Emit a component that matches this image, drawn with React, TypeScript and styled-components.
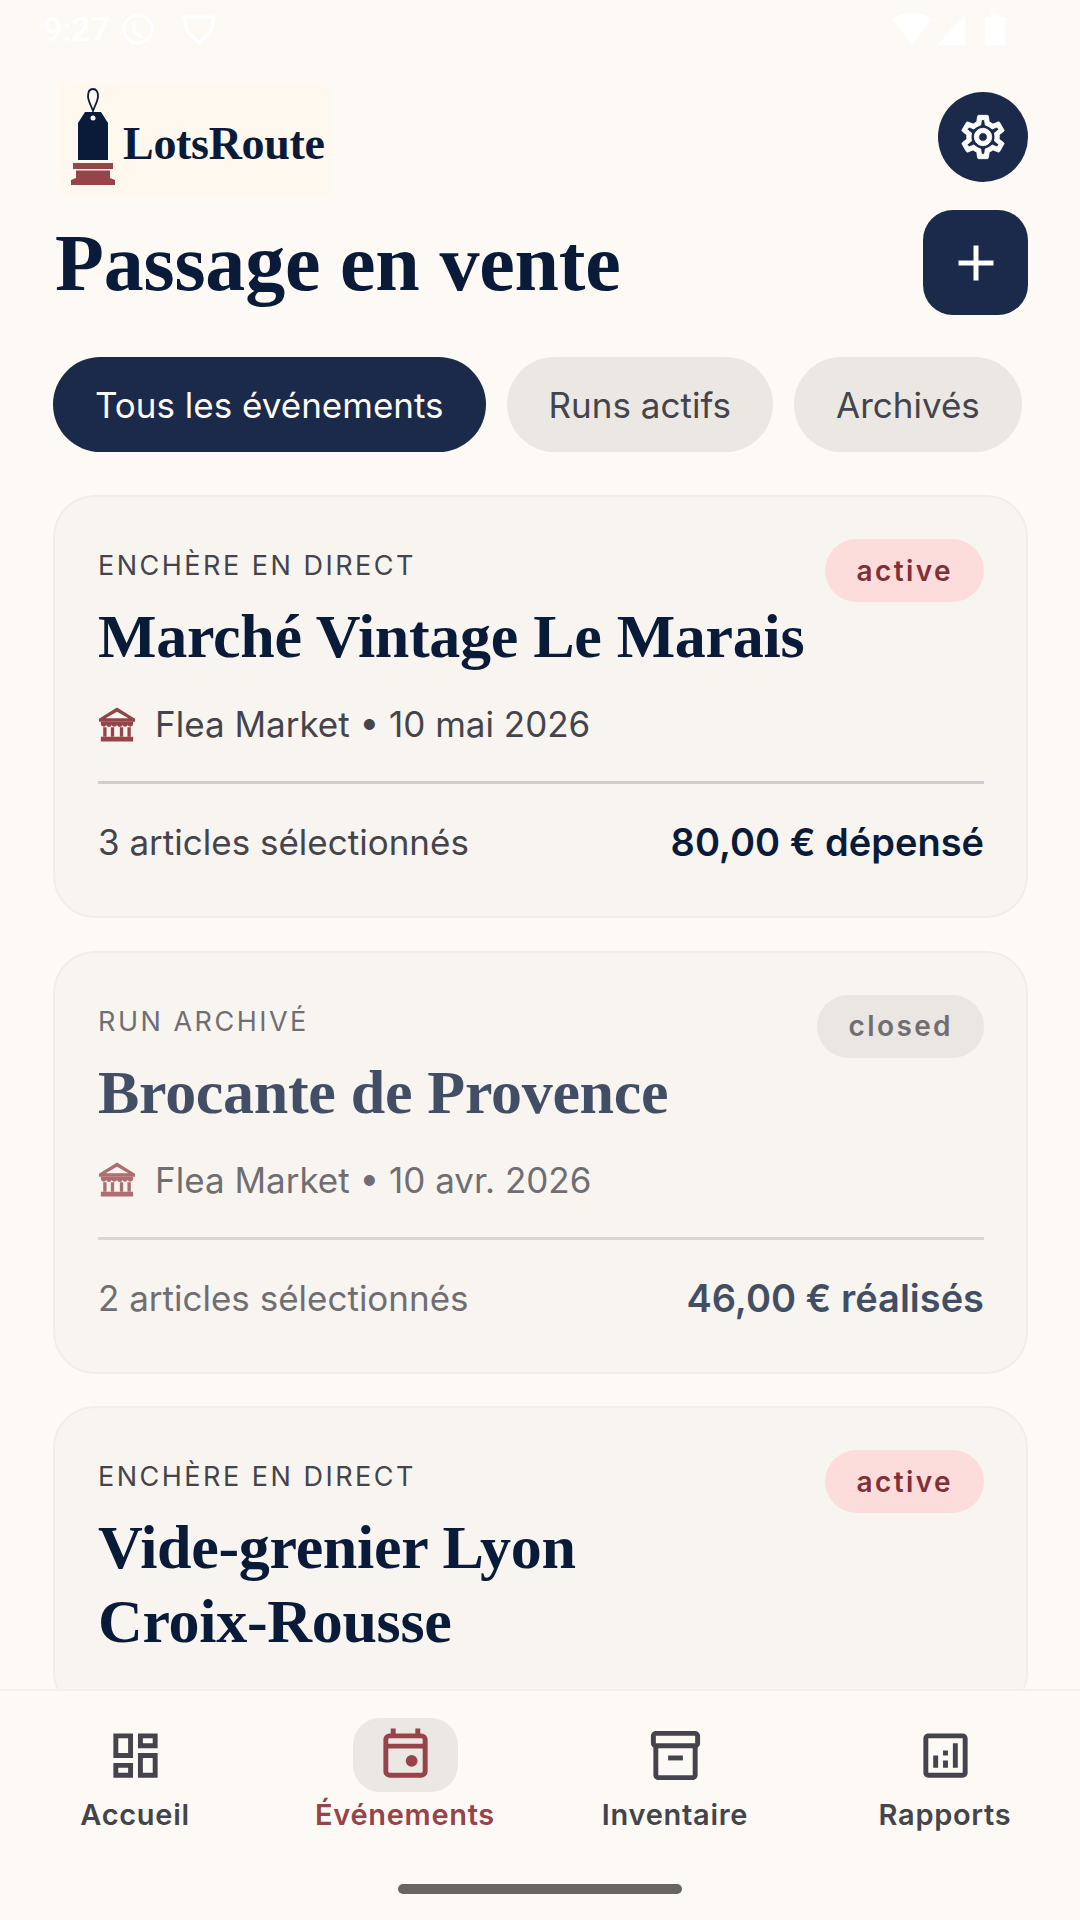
// App.tsx
import styled, { createGlobalStyle } from "styled-components";
import {
  MdAdd,
  MdOutlineAnalytics,
  MdOutlineDashboard,
  MdOutlineInventory2,
  MdOutlineSettings,
} from "react-icons/md";

const GlobalStyle = createGlobalStyle`
  * { box-sizing: border-box; }
  html, body { margin: 0; padding: 0; background: #fdfaf5; }
  body { font-family: "Inter", "Liberation Sans", sans-serif; }
`;

const SERIF = `"Liberation Serif", "Times New Roman", serif`;

interface EventCardData {
  kicker: string;
  title: string;
  status: "active" | "closed";
  meta?: string;
  count?: string;
  amount?: string;
  archived?: boolean;
}

const events: EventCardData[] = [
  {
    kicker: "ENCHÈRE EN DIRECT",
    title: "Marché Vintage Le Marais",
    status: "active",
    meta: "Flea Market • 10 mai 2026",
    count: "3 articles sélectionnés",
    amount: "80,00 € dépensé",
  },
  {
    kicker: "RUN ARCHIVÉ",
    title: "Brocante de Provence",
    status: "closed",
    meta: "Flea Market • 10 avr. 2026",
    count: "2 articles sélectionnés",
    amount: "46,00 € réalisés",
    archived: true,
  },
  {
    kicker: "ENCHÈRE EN DIRECT",
    title: "Vide-grenier Lyon\nCroix-Rousse",
    status: "active",
  },
];

const LogoMark = () => (
  <svg width="48" height="100" viewBox="0 0 48 100" fill="none">
    <path d="M24 2c-3.500 0-5 3-5 7 0 5 3 9 5 15 2-6 5-10 5-15 0-4-1.500-7-5-7z" stroke="#0a1b3a" strokeWidth="1.800" />
    <path d="M16 25h16l7 11v37H9V36z" fill="#0a1b3a" />
    <circle cx="24" cy="31" r="2.500" fill="#fdf6ea" />
    <path d="M4 76h40v6h-3v9l5 2v5H2v-5l5-2v-9H4z" fill="#96434a" />
    <path d="M7 82h34v1.500H7z" fill="#fdf6ea" />
  </svg>
);

const TempleIcon = () => (
  <svg width="38" height="35" viewBox="0 0 40 36" fill="#96434a">
    <path d="M20 0 39 12v3H1v-3zM20 4.500 8 11.500h24z" fillRule="evenodd" />
    <path d="M3 15h34v2.500a3 3 0 0 1-5.700 1 3 3 0 0 1-5.600 0 3 3 0 0 1-5.700 0 3 3 0 0 1-5.600 0 3 3 0 0 1-5.700 0A3 3 0 0 1 3 17.500z" />
    <path d="M5.500 21H9v10H5.500zM13.500 21H17v10h-3.500zM23 21h3.500v10H23zM31 21h3.500v10H31z" />
    <path d="M3 31h34v5H3z" />
  </svg>
);

const CalendarDotIcon = () => (
  <svg width="59" height="59" viewBox="0 0 24 24" fill="none" stroke="#96434a" strokeWidth="2">
    <rect x="4" y="4" width="16" height="16" rx="1.500" />
    <path d="M3.500 8.200h17M7 1v3M17 1v3" />
    <circle cx="14.500" cy="14.200" r="2.400" fill="#96434a" stroke="none" />
  </svg>
);

const StatusIcons = () => (
  <svg width="120" height="40" viewBox="0 0 120 40" fill="#ffffff">
    <path d="M1 10c10-8 30-8 40 0L21 36z" />
    <path d="M74 6v30H46z" />
    <path d="M94 8h6V4h8v4h6v28H94z" />
  </svg>
);

const AppIcons = () => (
  <svg width="120" height="40" viewBox="0 0 120 40" fill="none" stroke="#ffffff" strokeWidth="3">
    <circle cx="18" cy="20" r="14" />
    <path d="M14 12v12l8 4" />
    <path d="M64 8h30l-3 14-12 12-12-12z" />
  </svg>
);

const App = () => {
  return (
    <Screen>
      <GlobalStyle />
      <Scroller>
        <StatusBar>
          <StatusLeft>
            <Clock>9:27</Clock>
            <AppIcons />
          </StatusLeft>
          <StatusIcons />
        </StatusBar>

        <LogoRow>
          <LogoBox>
            <LogoMark />
            <LogoText>LotsRoute</LogoText>
          </LogoBox>
          <SettingsButton>
            <MdOutlineSettings size={52} />
          </SettingsButton>
        </LogoRow>

        <TitleRow>
          <PageTitle>Passage en vente</PageTitle>
          <AddButton>
            <MdAdd size={60} />
          </AddButton>
        </TitleRow>

        <Tabs>
          <Tab $active>Tous les événements</Tab>
          <Tab>Runs actifs</Tab>
          <Tab>Archivés</Tab>
        </Tabs>

        <CardList>
          {events.map((event) => (
            <Card key={event.title}>
              <CardInner $archived={event.archived}>
                <CardTop>
                  <CardHeading>
                    <Kicker>{event.kicker}</Kicker>
                    <CardTitle>{event.title}</CardTitle>
                  </CardHeading>
                  <Badge $status={event.status}>{event.status}</Badge>
                </CardTop>
                {event.meta && (
                  <>
                    <Meta>
                      <TempleIcon />
                      <span>{event.meta}</span>
                    </Meta>
                    <Divider />
                    <CardFooter>
                      <Count>{event.count}</Count>
                      <Amount>{event.amount}</Amount>
                    </CardFooter>
                  </>
                )}
              </CardInner>
            </Card>
          ))}
        </CardList>
      </Scroller>

      <BottomNav>
        <NavItems>
          <NavItem>
            <NavIcon>
              <MdOutlineDashboard size={59} />
            </NavIcon>
            <NavLabel>Accueil</NavLabel>
          </NavItem>
          <NavItem>
            <NavIcon $active>
              <CalendarDotIcon />
            </NavIcon>
            <NavLabel $active>Événements</NavLabel>
          </NavItem>
          <NavItem>
            <NavIcon>
              <MdOutlineInventory2 size={59} />
            </NavIcon>
            <NavLabel>Inventaire</NavLabel>
          </NavItem>
          <NavItem>
            <NavIcon>
              <MdOutlineAnalytics size={59} />
            </NavIcon>
            <NavLabel>Rapports</NavLabel>
          </NavItem>
        </NavItems>
        <HomeBar />
      </BottomNav>
    </Screen>
  );
};

const Screen = styled.div`
  width: 1080px;
  height: 1920px;
  display: flex;
  flex-direction: column;
  overflow: hidden;
  background: #fdfaf5;
`;

const Scroller = styled.main`
  flex: 1;
  min-height: 0;
  overflow: hidden;
  padding: 0 52px 0 53px;
`;

const StatusBar = styled.div`
  height: 82px;
  margin: 0 -8px 0 -10px;
  padding: 0 25px 24px 0;
  display: flex;
  align-items: center;
  justify-content: space-between;
`;

const StatusLeft = styled.div`
  display: flex;
  align-items: center;
  gap: 10px;
`;

const Clock = styled.span`
  font-family: "Roboto", sans-serif;
  font-size: 34px;
  font-weight: 500;
  color: #ffffff;
`;

const LogoRow = styled.div`
  display: flex;
  align-items: flex-start;
  justify-content: space-between;
`;

const LogoBox = styled.div`
  width: 270px;
  height: 113px;
  margin-left: 7px;
  padding: 5px 0 0 9px;
  display: flex;
  align-items: flex-start;
  gap: 6px;
  background: #fff8ee;
`;

const LogoText = styled.span`
  margin-top: 32px;
  font-family: ${SERIF};
  font-size: 46px;
  font-weight: 700;
  line-height: 50px;
  letter-spacing: -0.3px;
  color: #0a1b3a;
`;

const SettingsButton = styled.button`
  width: 90px;
  height: 90px;
  margin-top: 10px;
  padding: 0;
  border: none;
  border-radius: 50%;
  display: flex;
  align-items: center;
  justify-content: center;
  color: #ffffff;
  background: #1b2a4a;

  svg path {
    stroke: currentColor;
    stroke-width: 0.4;
  }

  svg path[fill="none"] {
    stroke: none;
  }
`;

const TitleRow = styled.div`
  margin-top: 15px;
  display: flex;
  align-items: center;
  justify-content: space-between;
`;

const PageTitle = styled.h1`
  margin: 0 0 0 2px;
  font-family: ${SERIF};
  font-size: 80px;
  font-weight: 700;
  line-height: 100px;
  letter-spacing: -0.2px;
  color: #0a1b3a;
`;

const AddButton = styled.button`
  width: 105px;
  height: 105px;
  padding: 0;
  border: none;
  border-radius: 30px;
  display: flex;
  align-items: center;
  justify-content: center;
  color: #ffffff;
  background: #1b2a4a;
`;

const Tabs = styled.div`
  margin-top: 42px;
  display: flex;
  gap: 21px;
`;

const Tab = styled.div<{ $active?: boolean }>`
  height: 95px;
  padding: 0 42px;
  border-radius: 48px;
  display: flex;
  align-items: center;
  font-size: 35px;
  font-weight: 400;
  color: ${(props) => (props.$active ? "#fdfaf5" : "#45444c")};
  background: ${(props) => (props.$active ? "#1b2a4a" : "#ebe8e3")};
`;

const CardList = styled.div`
  margin-top: 43px;
  display: flex;
  flex-direction: column;
  gap: 32.5px;
`;

const Card = styled.article`
  border: 2px solid #f1eee9;
  border-radius: 42px;
  background: #f8f5f0;
`;

const CardInner = styled.div<{ $archived?: boolean }>`
  padding: 42px 42px 54px 43px;
  opacity: ${(props) => (props.$archived ? 0.76 : 1)};
`;

const CardTop = styled.div`
  display: flex;
  align-items: flex-start;
  justify-content: space-between;
  gap: 4px;
`;

const CardHeading = styled.div`
  flex: 1;
  min-width: 0;
`;

const Kicker = styled.div`
  margin-top: 7px;
  font-size: 27px;
  line-height: 40px;
  letter-spacing: 2.5px;
  color: #45444c;
`;

const CardTitle = styled.h2`
  margin: 13px 0 0;
  font-family: ${SERIF};
  font-size: 62px;
  font-weight: 700;
  line-height: 74px;
  letter-spacing: -0.3px;
  white-space: pre-line;
  color: #0a1b3a;
`;

const Badge = styled.span<{ $status: "active" | "closed" }>`
  flex-shrink: 0;
  height: 63px;
  padding: 0 31px 0 32px;
  border-radius: 32px;
  display: flex;
  align-items: center;
  font-size: 28px;
  font-weight: 600;
  letter-spacing: 2.4px;
  color: ${(props) => (props.$status === "active" ? "#7f3038" : "#45444c")};
  background: ${(props) => (props.$status === "active" ? "#fddcdc" : "#e6e3de")};
`;

const Meta = styled.div`
  margin-top: 31px;
  height: 40px;
  display: flex;
  align-items: center;
  gap: 19px;
  font-size: 35px;
  color: #45444c;
`;

const Divider = styled.div`
  margin-top: 37px;
  height: 3px;
  background: #cfcdd0;
`;

const CardFooter = styled.div`
  margin-top: 38px;
  height: 40px;
  display: flex;
  align-items: center;
  justify-content: space-between;
`;

const Count = styled.span`
  font-size: 35px;
  color: #45444c;
`;

const Amount = styled.span`
  font-size: 38px;
  font-weight: 600;
  color: #0a1b3a;
`;

const BottomNav = styled.nav`
  flex-shrink: 0;
  height: 231px;
  padding-top: 27px;
  border-top: 2px solid #f3f0eb;
  display: flex;
  flex-direction: column;
  align-items: center;
  background: #fdfaf5;
`;

const NavItems = styled.div`
  width: 100%;
  display: grid;
  grid-template-columns: repeat(4, 1fr);
`;

const NavItem = styled.div`
  display: flex;
  flex-direction: column;
  align-items: center;
  gap: 3px;
`;

const NavIcon = styled.div<{ $active?: boolean }>`
  width: 105px;
  height: 74px;
  border-radius: 27px;
  display: flex;
  align-items: center;
  justify-content: center;
  color: #45444c;
  background: ${(props) => (props.$active ? "#ebe8e3" : "transparent")};
`;

const NavLabel = styled.span<{ $active?: boolean }>`
  font-size: 29px;
  font-weight: 600;
  line-height: 40px;
  letter-spacing: 0.7px;
  color: ${(props) => (props.$active ? "#96434a" : "#45444c")};
`;

const HomeBar = styled.div`
  width: 284px;
  height: 10px;
  margin-top: 49px;
  border-radius: 5px;
  background: #686660;
`;

export default App;
